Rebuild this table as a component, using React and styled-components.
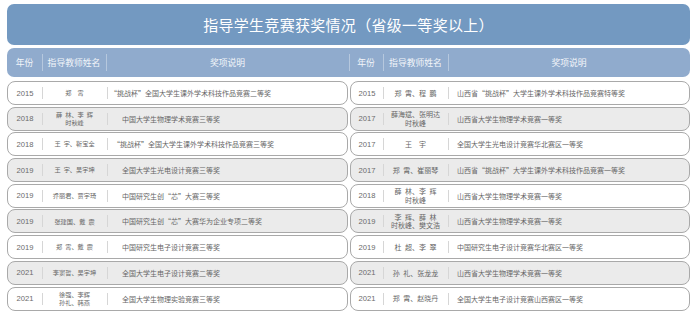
import React from "react";
import styled, { createGlobalStyle } from "styled-components";

const Global = createGlobalStyle`
  html, body { margin: 0; padding: 0; background: #ffffff; }
  body { font-family: "Liberation Sans", "Noto Sans CJK SC", sans-serif; }
`;

const Page = styled.div`
  width: 683px;
  padding: 4px 0 0 7px;
  display: flex;
  flex-direction: column;
`;

const Title = styled.div`
  height: 41px;
  border-radius: 7px;
  background: #7399c1;
  color: #ffffff;
  display: flex;
  align-items: center;
  justify-content: center;
  font-family: "Noto Sans CJK SC", sans-serif;
  font-size: 15px;
  letter-spacing: 0.3px;
`;

const Header = styled.div`
  margin-top: 3px;
  height: 29px;
  border-radius: 7px;
  background: #90abcd;
  display: grid;
  grid-template-columns: 342px 1fr;
`;

const HeaderHalf = styled.div`
  display: grid;
  grid-template-columns: ${(p) => (p.$right ? "34px 65px 1fr" : "35px 64px 1fr")};
  align-items: center;
  position: relative;
  ${(p) =>
    p.$right &&
    `&::before { content: ""; position: absolute; left: 0; top: 6px; bottom: 6px; width: 1px; background: rgba(255,255,255,0.35); }`}
`;

const HeadCell = styled.div`
  position: relative;
  height: 100%;
  display: flex;
  align-items: center;
  justify-content: center;
  color: #f3f6fa;
  font-family: "Noto Sans CJK SC", sans-serif;
  font-size: 8.8px;
  ${(p) =>
    p.$divider &&
    `&::before { content: ""; position: absolute; left: 0; top: 6px; bottom: 6px; width: 1px; background: rgba(255,255,255,0.35); }`}
`;

const Body = styled.div`
  margin-top: 4px;
  display: grid;
  grid-template-columns: 341px 340px;
  column-gap: 2px;
`;

const Column = styled.div`
  display: flex;
  flex-direction: column;
  gap: 1.7px;
`;

const Row = styled.div`
  box-sizing: border-box;
  height: 24px;
  border: 1px solid #a9a9a9;
  border-radius: 8px;
  background: ${(p) => (p.$grey ? "#ebebeb" : "#ffffff")};
  display: grid;
  grid-template-columns: ${(p) => (p.$right ? "32px 65px 1fr" : "34px 65px 1fr")};
  align-items: center;
  color: #666666;
`;

const Cell = styled.div`
  position: relative;
  height: 100%;
  display: flex;
  align-items: center;
  ${(p) =>
    p.$divider &&
    `&::before { content: ""; position: absolute; left: 0; top: 5px; bottom: 5px; width: 1px; background: #d6d6d6; }`}
`;

const Year = styled(Cell)`
  justify-content: center;
  font-family: "Liberation Sans", sans-serif;
  font-size: 7.6px;
  color: #6a6a6a;
`;

const Names = styled(Cell)`
  justify-content: center;
  flex-direction: column;
  text-align: center;
  font-family: "Noto Sans CJK SC", sans-serif;
  font-size: ${(p) => (p.$small ? "6.2px" : "7px")};
  white-space: pre;
`;

const NameLine = styled.span`
  display: block;
  height: ${(p) => (p.$small ? "7.8px" : "8.6px")};
  line-height: ${(p) => (p.$small ? "7.8px" : "8.6px")};
`;

const Award = styled(Cell)`
  padding-left: ${(p) => p.$pad}px;
  font-family: "Noto Sans CJK SC", sans-serif;
  font-size: 7px;
  white-space: nowrap;
`;

const S = "\u2002";

const left = [
  ["2015", [`郑${S}${S}霄`], "“挑战杯”全国大学生课外学术科技作品竞赛二等奖", 3],
  ["2018", [`薛${S}林、李${S}辉`, "时秋峰"], "中国大学生物理学术竞赛三等奖", 15],
  ["2018", [`王${S}宇、靳宝全`], "“挑战杯”全国大学生课外学术科技作品竞赛三等奖", 6],
  ["2019", [`王${S}宇、吴宇坤`], "全国大学生光电设计竞赛三等奖", 15],
  ["2019", ["乔丽君、贾宇琦"], "中国研究生创“芯”大赛三等奖", 15],
  ["2019", [`张建国、戴${S}震`], "中国研究生创“芯”大赛华为企业专项二等奖", 15],
  ["2019", [`郑${S}霄、戴${S}震`], "中国研究生电子设计竞赛三等奖", 15],
  ["2021", ["李窦哲、吴宇坤"], "全国大学生电子设计竞赛二等奖", 15],
  ["2021", ["徐强、李辉", "孙礼、韩燕"], "全国大学生物理实验竞赛三等奖", 15],
];

const right = [
  ["2015", [`郑${S}霄、程${S}鹏`], "山西省“挑战杯”大学生课外学术科技作品竞赛特等奖"],
  ["2017", ["薛海斌、张明达", "时秋峰"], "山西省大学生物理学术竞赛一等奖"],
  ["2017", [`王${S}${S}宇`], "全国大学生光电设计竞赛华北赛区一等奖"],
  ["2017", [`郑${S}霄、崔丽琴`], "山西省“挑战杯”大学生课外学术科技作品竞赛一等奖"],
  ["2018", [`薛${S}林、李${S}辉`, "时秋峰"], "山西省大学生物理学术竞赛一等奖"],
  ["2019", [`李${S}辉、薛${S}林`, "时秋峰、樊文浩"], "山西省大学生物理学术竞赛一等奖"],
  ["2019", [`杜${S}超、李${S}翠`], "中国研究生电子设计竞赛华北赛区一等奖"],
  ["2021", [`孙${S}礼、张龙龙`], "山西省大学生物理学术竞赛一等奖"],
  ["2021", [`郑${S}霄、赵晓丹`], "全国大学生电子设计竞赛山西赛区一等奖"],
];

function HeadHalf({ right: isRight }) {
  return (
    <HeaderHalf $right={isRight}>
      <HeadCell>年份</HeadCell>
      <HeadCell $divider>指导教师姓名</HeadCell>
      <HeadCell $divider>奖项说明</HeadCell>
    </HeaderHalf>
  );
}

export default function App() {
  return (
    <>
      <Global />
      <Page>
        <Title>指导学生竞赛获奖情况（省级一等奖以上）</Title>
        <Header>
          <HeadHalf />
          <HeadHalf right />
        </Header>
        <Body>
          <Column>
            {left.map(([y, n, a, pad], i) => (
              <Row key={i} $grey={i % 2 === 1}>
                <Year>{y}</Year>
                <Names $divider $small>
                  {n.map((l, j) => (
                    <NameLine key={j} $small>{l}</NameLine>
                  ))}
                </Names>
                <Award $divider $pad={pad}>{a}</Award>
              </Row>
            ))}
          </Column>
          <Column>
            {right.map(([y, n, a], i) => (
              <Row key={i} $right $grey={i % 2 === 1}>
                <Year>{y}</Year>
                <Names $divider>
                  {n.map((l, j) => (
                    <NameLine key={j}>{l}</NameLine>
                  ))}
                </Names>
                <Award $divider $pad={9}>{a}</Award>
              </Row>
            ))}
          </Column>
        </Body>
      </Page>
    </>
  );
}
